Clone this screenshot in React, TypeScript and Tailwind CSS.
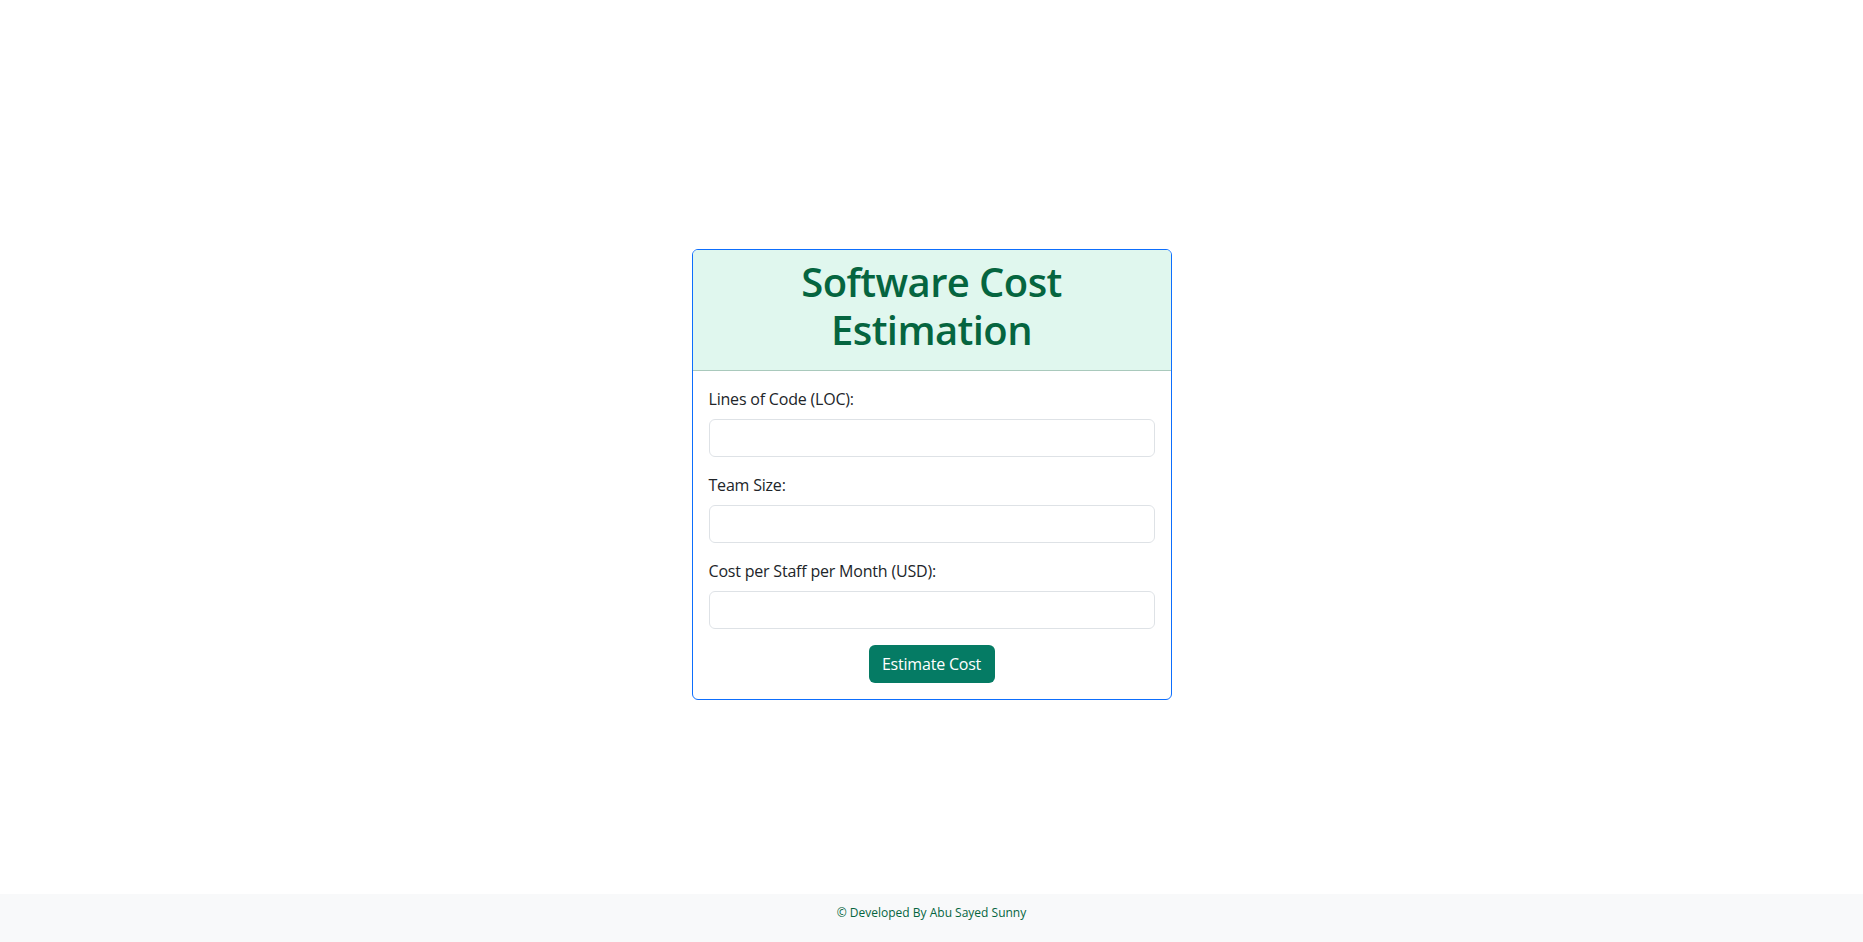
import React, { useState } from "react";

const fields = [
  { id: "loc", label: "Lines of Code (LOC):" },
  { id: "team", label: "Team Size:" },
  { id: "cost", label: "Cost per Staff per Month (USD):" },
];

const App: React.FC = () => {
  const [values, setValues] = useState<Record<string, string>>({});

  return (
    <div className="min-h-screen flex flex-col bg-white font-['Open_Sans',sans-serif] text-[#212529]">
      <main className="flex-1 flex items-center justify-center pt-[54px]">
        <div className="w-[480px] border border-[#0d6efd] rounded-md overflow-hidden">
          <div className="bg-[#e0f7ee] border-b border-[#a9c9bc] px-4 pt-2 pb-4 text-center">
            <h1 className="text-[40px] leading-[48px] font-semibold text-[#05653f] tracking-[-0.6px]">
              <span className="block">Software Cost</span>
              <span className="block">Estimation</span>
            </h1>
          </div>
          <div className="p-4">
            {fields.map((f) => (
              <div key={f.id} className="mb-4">
                <label htmlFor={f.id} className="block text-[16px] leading-6 mb-2 tracking-[-0.2px]">
                  {f.label}
                </label>
                <input
                  id={f.id}
                  type="number"
                  value={values[f.id] ?? ""}
                  onChange={(e) => setValues({ ...values, [f.id]: e.target.value })}
                  className="block w-full h-[38px] px-3 border border-[#dee2e6] rounded-md outline-none"
                />
              </div>
            ))}
            <div className="flex justify-center">
              <button className="h-[38px] w-[126px] rounded-md bg-[#057b64] text-white text-[16px] tracking-[-0.2px]">
                Estimate Cost
              </button>
            </div>
          </div>
        </div>
      </main>
      <footer className="h-[48px] bg-[#f8f9fa] flex items-start justify-center pt-[10px]">
        <p className="text-[12px] text-[#05653f]">© Developed By Abu Sayed Sunny</p>
      </footer>
    </div>
  );
};

export default App;
